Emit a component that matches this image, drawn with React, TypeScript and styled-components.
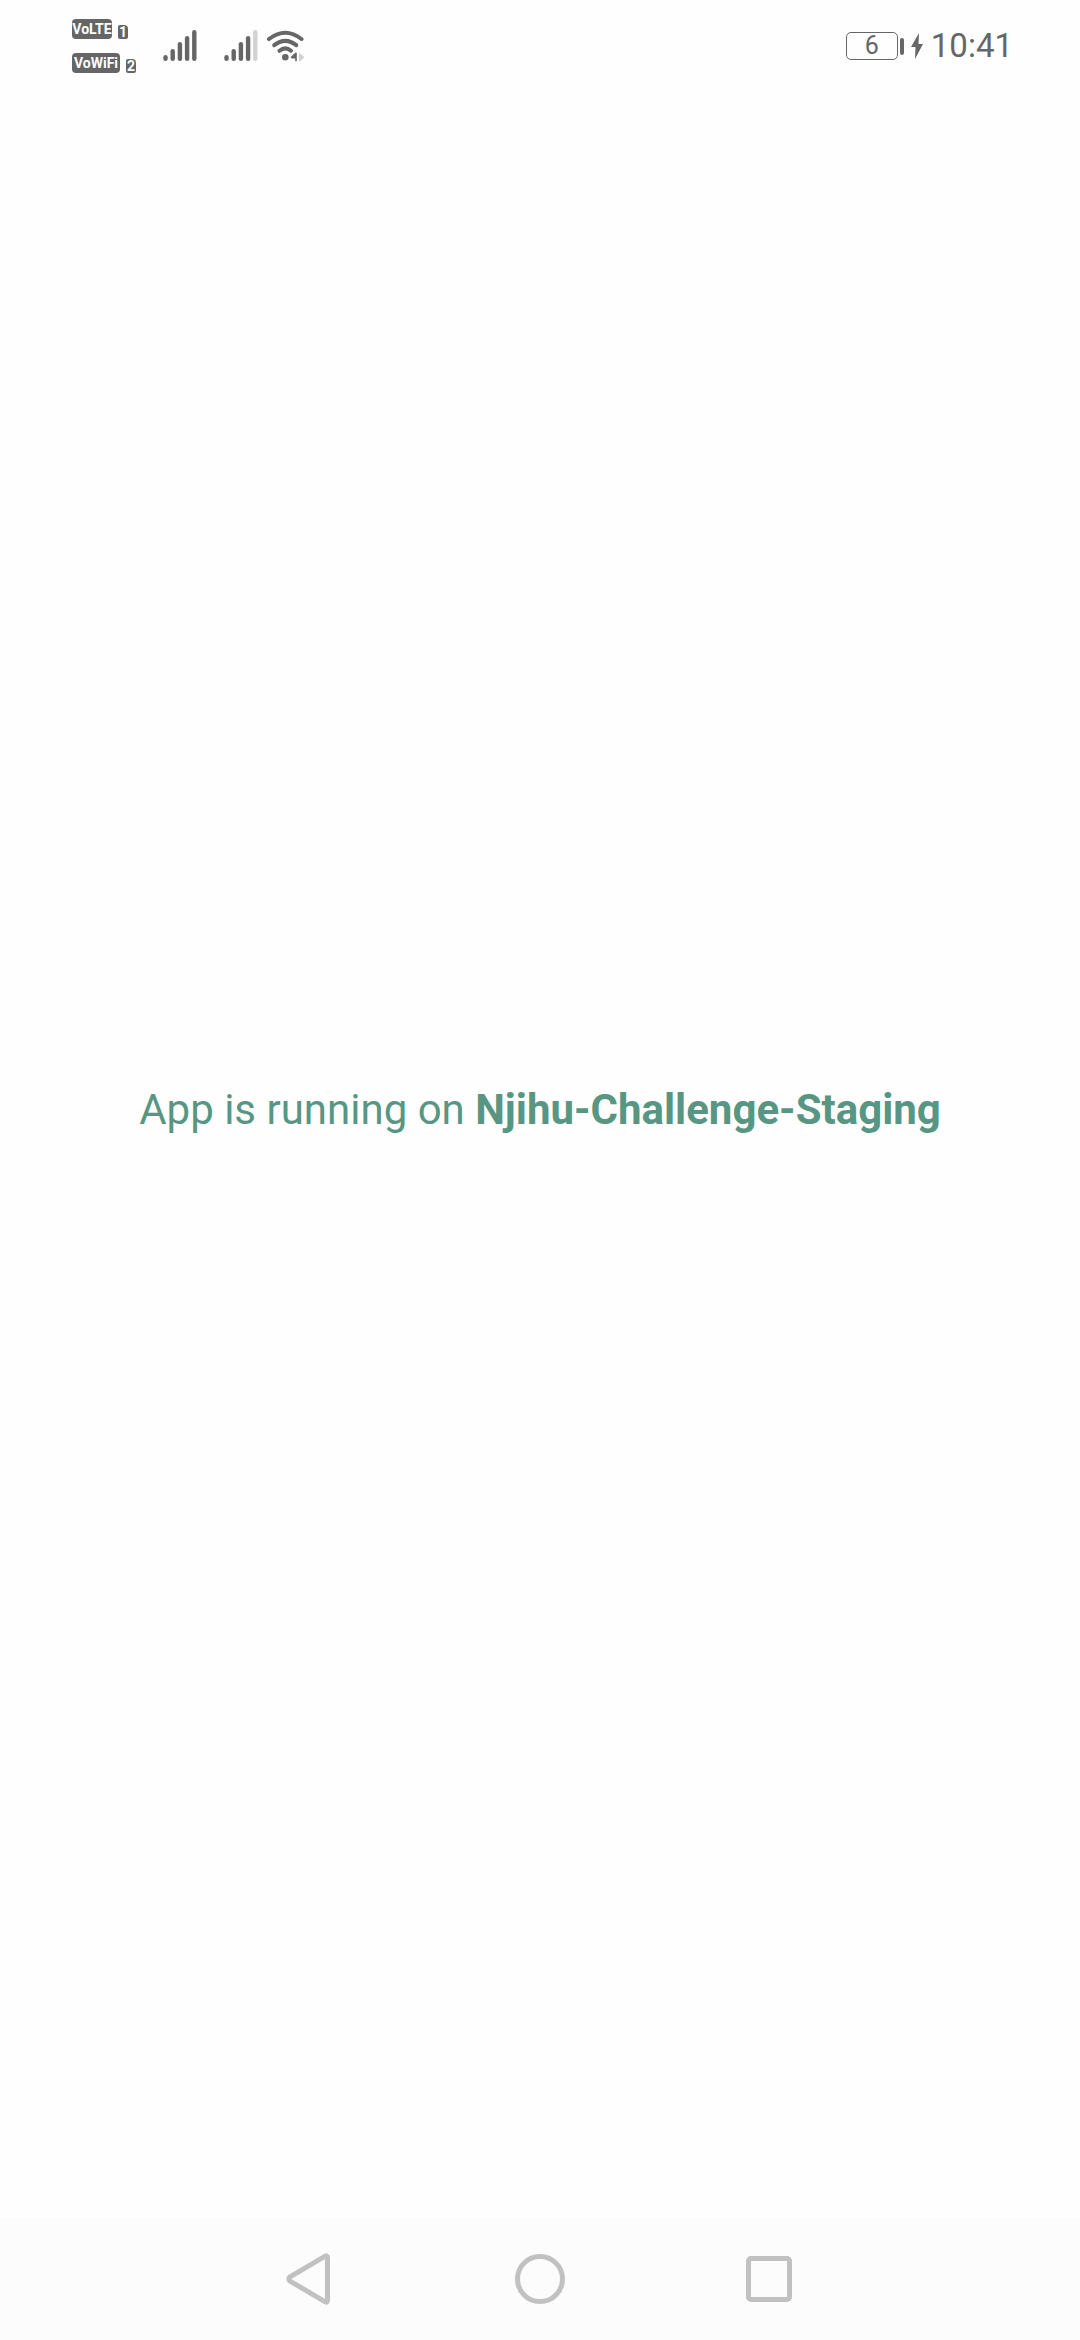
import React from "react";
import styled, { createGlobalStyle } from "styled-components";

const ink = "#666666";

const GlobalStyle = createGlobalStyle`
  body {
    margin: 0;
    background: #fefefe;
    font-family: Roboto, "Noto Sans", sans-serif;
  }
`;

const Screen = styled.div`
  display: flex;
  flex-direction: column;
  min-height: 100vh;
`;

const StatusBar = styled.header`
  display: flex;
  justify-content: space-between;
  align-items: center;
  height: 92px;
  margin-bottom: -92px;
  padding: 0 67px 0 72px;
  color: ${ink};
`;

const StatusGroup = styled.div`
  display: flex;
  align-items: center;
`;

const Carriers = styled.div`
  display: flex;
  flex-direction: column;
  gap: 14px;
  width: 91px;
`;

const Carrier = styled.div`
  display: flex;
  align-items: flex-end;
  gap: 6px;
`;

const Badge = styled.span<{ $width: number }>`
  width: ${(p) => p.$width}px;
  height: 20px;
  border-radius: 4px;
  background: ${ink};
  color: #fefefe;
  font-size: 14px;
  font-weight: 700;
  line-height: 20px;
  text-align: center;
  white-space: nowrap;
`;

const SimBadge = styled.span`
  width: 10px;
  height: 14px;
  border-radius: 2px 4px 2px 2px;
  background: ${ink};
  color: #fefefe;
  font-size: 14px;
  font-weight: 700;
  line-height: 14px;
  text-align: center;
`;

const Signal = styled.svg`
  width: 34px;
  height: 32px;
  margin-right: 27px;
`;

const Wifi = styled.svg`
  width: 40px;
  height: 32px;
  margin-left: -19px;
`;

const Battery = styled.span`
  box-sizing: border-box;
  width: 52px;
  height: 28px;
  border: 1px solid ${ink};
  border-radius: 5px;
  font-size: 25px;
  line-height: 26px;
  text-align: center;
`;

const BatteryTip = styled.span`
  width: 4px;
  height: 17px;
  margin-left: 2px;
  border-radius: 2px;
  background: ${ink};
`;

const Bolt = styled.svg`
  width: 12px;
  height: 26px;
  margin: 0 8px 0 7px;
`;

const Clock = styled.time`
  font-size: 33px;
  line-height: 40px;
`;

const Content = styled.main`
  flex: 1;
  display: flex;
  align-items: center;
  justify-content: center;
  padding-top: 2px;
`;

const Message = styled.p`
  margin: 0;
  color: #589684;
  font-size: 42px;
  line-height: 50px;
  text-align: center;
`;

const NavBar = styled.nav`
  display: flex;
  justify-content: center;
  height: 122px;
  background: #fcfcfc;
`;

const NavButton = styled.button`
  display: flex;
  align-items: center;
  justify-content: center;
  width: 230px;
  padding: 0;
  border: 0;
  background: none;
`;

const NavIcon = styled.svg`
  width: 60px;
  height: 60px;
  fill: none;
  stroke: #c1c1c1;
  stroke-width: 5;
  stroke-linejoin: round;
`;

function SignalIcon({ level }: { level: number }) {
  return (
    <Signal viewBox="0 0 34 32" aria-hidden="true">
      {[6, 12, 19, 25, 31].map((height, i) => (
        <rect
          key={height}
          x={i * 7.2 + 0.3}
          y={31 - height}
          width="4.4"
          height={height}
          rx="2.2"
          fill={i < level ? ink : "#d2d2d2"}
        />
      ))}
    </Signal>
  );
}

export default function App() {
  return (
    <>
      <GlobalStyle />
      <Screen>
        <StatusBar>
          <StatusGroup>
            <Carriers>
              <Carrier>
                <Badge $width={40}>VoLTE</Badge>
                <SimBadge>1</SimBadge>
              </Carrier>
              <Carrier>
                <Badge $width={48}>VoWiFi</Badge>
                <SimBadge>2</SimBadge>
              </Carrier>
            </Carriers>
            <SignalIcon level={5} />
            <SignalIcon level={4} />
            <Wifi viewBox="0 0 40 32" aria-hidden="true">
              <g fill="none" stroke={ink} strokeWidth="4" strokeLinecap="round">
                <path d="M3 9Q19.300-3.400 35.500 9" />
                <path d="M8.200 15.200Q19.300 6.600 30.300 15.200" />
                <path d="M13.500 20.800Q19.300 16 25 20.800" />
              </g>
              <circle cx="19.300" cy="27.200" r="3.300" fill={ink} />
              <path d="M24.500 27.200L29.200 22.800H30.800V31.200H29.200V28.500H26Z" fill={ink} />
              <path d="M33 22.800L38.500 27.200L34.200 31.200H33Z" fill="#d2d2d2" />
            </Wifi>
          </StatusGroup>
          <StatusGroup>
            <Battery>6</Battery>
            <BatteryTip />
            <Bolt viewBox="0 0 12 26" aria-hidden="true">
              <path d="M8 0L0 14H4.500L4 26L12 11H7.500Z" fill={ink} />
            </Bolt>
            <Clock>10:41</Clock>
          </StatusGroup>
        </StatusBar>
        <Content>
          <Message>
            App is running on <strong>Njihu-Challenge-Staging</strong>
          </Message>
        </Content>
        <NavBar>
          <NavButton aria-label="Back">
            <NavIcon viewBox="0 0 60 60">
              <path d="M9.600 28.200L45.200 7.200Q47.500 6 47.500 9.200V50.800Q47.500 54 45.200 52.800L9.600 31.800Q8.200 30 9.600 28.200Z" />
            </NavIcon>
          </NavButton>
          <NavButton aria-label="Home">
            <NavIcon viewBox="0 0 60 60">
              <circle cx="30" cy="30" r="22.500" />
            </NavIcon>
          </NavButton>
          <NavButton aria-label="Recent apps">
            <NavIcon viewBox="0 0 60 60">
              <rect x="8.500" y="9.500" width="41" height="41" rx="2.500" />
            </NavIcon>
          </NavButton>
        </NavBar>
      </Screen>
    </>
  );
}
